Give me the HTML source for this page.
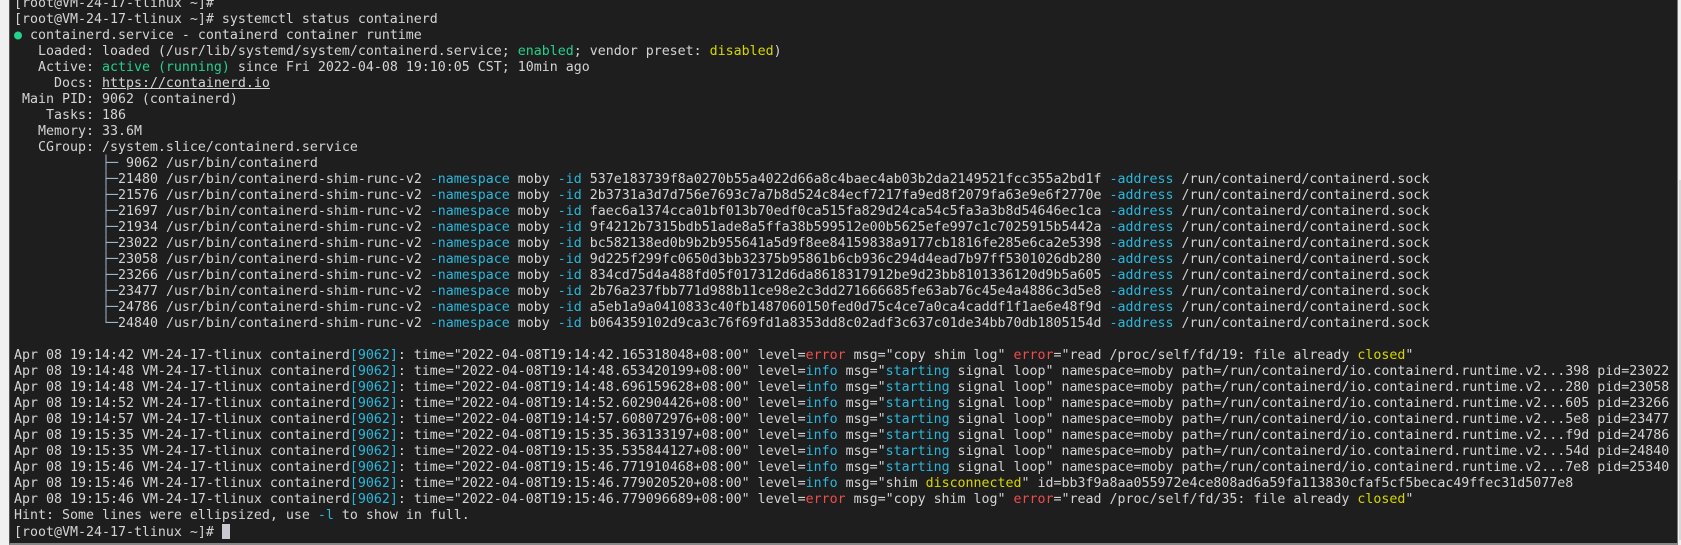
<!DOCTYPE html>
<html><head><meta charset="utf-8"><style>
html,body{margin:0;padding:0;width:1681px;height:545px;overflow:hidden;background:#f0f0f0;}
#term{position:absolute;left:9px;top:0;width:1667px;height:543px;background:#1e1e1e;border-left:1px solid #555;border-right:1px solid #777;border-bottom:2px solid #888;overflow:hidden;}
pre{position:absolute;left:4px;top:-4px;margin:0;font-family:"DejaVu Sans Mono","Liberation Mono",monospace;font-size:13.29px;line-height:16px;color:#d4d4d4;white-space:pre;}
.g{color:#23d18b}.c{color:#29b8db}.r{color:#f14c4c}.y{color:#d7d700}.t{color:#9fb3c8}.u{text-decoration:underline}
.cur{display:inline-block;width:8px;height:15px;background:#c8c8d0;vertical-align:-3px}
#sb{position:absolute;left:1679px;top:180px;width:2px;height:360px;background:#d8d8d8}
</style></head><body><div id="term"><pre>[root@VM-24-17-tlinux ~]#
[root@VM-24-17-tlinux ~]# systemctl status containerd
<span class="g">●</span> containerd.service - containerd container runtime
   Loaded: loaded (/usr/lib/systemd/system/containerd.service; <span class="g">enabled</span>; vendor preset: <span class="y">disabled</span>)
   Active: <span class="g">active (running)</span> since Fri 2022-04-08 19:10:05 CST; 10min ago
     Docs: <span class="u">https://containerd.io</span>
 Main PID: 9062 (containerd)
    Tasks: 186
   Memory: 33.6M
   CGroup: /system.slice/containerd.service
           <span class="t">├─</span> 9062 /usr/bin/containerd
           <span class="t">├─</span>21480 /usr/bin/containerd-shim-runc-v2 <span class="c">-namespace</span> moby <span class="c">-id</span> 537e183739f8a0270b55a4022d66a8c4baec4ab03b2da2149521fcc355a2bd1f <span class="c">-address</span> /run/containerd/containerd.sock
           <span class="t">├─</span>21576 /usr/bin/containerd-shim-runc-v2 <span class="c">-namespace</span> moby <span class="c">-id</span> 2b3731a3d7d756e7693c7a7b8d524c84ecf7217fa9ed8f2079fa63e9e6f2770e <span class="c">-address</span> /run/containerd/containerd.sock
           <span class="t">├─</span>21697 /usr/bin/containerd-shim-runc-v2 <span class="c">-namespace</span> moby <span class="c">-id</span> faec6a1374cca01bf013b70edf0ca515fa829d24ca54c5fa3a3b8d54646ec1ca <span class="c">-address</span> /run/containerd/containerd.sock
           <span class="t">├─</span>21934 /usr/bin/containerd-shim-runc-v2 <span class="c">-namespace</span> moby <span class="c">-id</span> 9f4212b7315bdb51ade8a5ffa38b599512e00b5625efe997c1c7025915b5442a <span class="c">-address</span> /run/containerd/containerd.sock
           <span class="t">├─</span>23022 /usr/bin/containerd-shim-runc-v2 <span class="c">-namespace</span> moby <span class="c">-id</span> bc582138ed0b9b2b955641a5d9f8ee84159838a9177cb1816fe285e6ca2e5398 <span class="c">-address</span> /run/containerd/containerd.sock
           <span class="t">├─</span>23058 /usr/bin/containerd-shim-runc-v2 <span class="c">-namespace</span> moby <span class="c">-id</span> 9d225f299fc0650d3bb32375b95861b6cb936c294d4ead7b97ff5301026db280 <span class="c">-address</span> /run/containerd/containerd.sock
           <span class="t">├─</span>23266 /usr/bin/containerd-shim-runc-v2 <span class="c">-namespace</span> moby <span class="c">-id</span> 834cd75d4a488fd05f017312d6da8618317912be9d23bb8101336120d9b5a605 <span class="c">-address</span> /run/containerd/containerd.sock
           <span class="t">├─</span>23477 /usr/bin/containerd-shim-runc-v2 <span class="c">-namespace</span> moby <span class="c">-id</span> 2b76a237fbb771d988b11ce98e2c3dd271666685fe63ab76c45e4a4886c3d5e8 <span class="c">-address</span> /run/containerd/containerd.sock
           <span class="t">├─</span>24786 /usr/bin/containerd-shim-runc-v2 <span class="c">-namespace</span> moby <span class="c">-id</span> a5eb1a9a0410833c40fb1487060150fed0d75c4ce7a0ca4caddf1f1ae6e48f9d <span class="c">-address</span> /run/containerd/containerd.sock
           <span class="t">└─</span>24840 /usr/bin/containerd-shim-runc-v2 <span class="c">-namespace</span> moby <span class="c">-id</span> b064359102d9ca3c76f69fd1a8353dd8c02adf3c637c01de34bb70db1805154d <span class="c">-address</span> /run/containerd/containerd.sock

Apr 08 19:14:42 VM-24-17-tlinux containerd<span class="c">[9062]</span>: time="2022-04-08T19:14:42.165318048+08:00" level=<span class="r">error</span> msg="copy shim log" <span class="r">error</span>="read /proc/self/fd/19: file already <span class="y">closed</span>"
Apr 08 19:14:48 VM-24-17-tlinux containerd<span class="c">[9062]</span>: time="2022-04-08T19:14:48.653420199+08:00" level=<span class="c">info</span> msg="<span class="c">starting</span> signal loop" namespace=moby path=/run/containerd/io.containerd.runtime.v2...398 pid=23022
Apr 08 19:14:48 VM-24-17-tlinux containerd<span class="c">[9062]</span>: time="2022-04-08T19:14:48.696159628+08:00" level=<span class="c">info</span> msg="<span class="c">starting</span> signal loop" namespace=moby path=/run/containerd/io.containerd.runtime.v2...280 pid=23058
Apr 08 19:14:52 VM-24-17-tlinux containerd<span class="c">[9062]</span>: time="2022-04-08T19:14:52.602904426+08:00" level=<span class="c">info</span> msg="<span class="c">starting</span> signal loop" namespace=moby path=/run/containerd/io.containerd.runtime.v2...605 pid=23266
Apr 08 19:14:57 VM-24-17-tlinux containerd<span class="c">[9062]</span>: time="2022-04-08T19:14:57.608072976+08:00" level=<span class="c">info</span> msg="<span class="c">starting</span> signal loop" namespace=moby path=/run/containerd/io.containerd.runtime.v2...5e8 pid=23477
Apr 08 19:15:35 VM-24-17-tlinux containerd<span class="c">[9062]</span>: time="2022-04-08T19:15:35.363133197+08:00" level=<span class="c">info</span> msg="<span class="c">starting</span> signal loop" namespace=moby path=/run/containerd/io.containerd.runtime.v2...f9d pid=24786
Apr 08 19:15:35 VM-24-17-tlinux containerd<span class="c">[9062]</span>: time="2022-04-08T19:15:35.535844127+08:00" level=<span class="c">info</span> msg="<span class="c">starting</span> signal loop" namespace=moby path=/run/containerd/io.containerd.runtime.v2...54d pid=24840
Apr 08 19:15:46 VM-24-17-tlinux containerd<span class="c">[9062]</span>: time="2022-04-08T19:15:46.771910468+08:00" level=<span class="c">info</span> msg="<span class="c">starting</span> signal loop" namespace=moby path=/run/containerd/io.containerd.runtime.v2...7e8 pid=25340
Apr 08 19:15:46 VM-24-17-tlinux containerd<span class="c">[9062]</span>: time="2022-04-08T19:15:46.779020520+08:00" level=<span class="c">info</span> msg="shim <span class="y">disconnected</span>" id=bb3f9a8aa055972e4ce808ad6a59fa113830cfaf5cf5becac49ffec31d5077e8
Apr 08 19:15:46 VM-24-17-tlinux containerd<span class="c">[9062]</span>: time="2022-04-08T19:15:46.779096689+08:00" level=<span class="r">error</span> msg="copy shim log" <span class="r">error</span>="read /proc/self/fd/35: file already <span class="y">closed</span>"
Hint: Some lines were ellipsized, use <span class="c">-l</span> to show in full.
[root@VM-24-17-tlinux ~]# <span class="cur"></span></pre></div><div id="sb"></div></body></html>
